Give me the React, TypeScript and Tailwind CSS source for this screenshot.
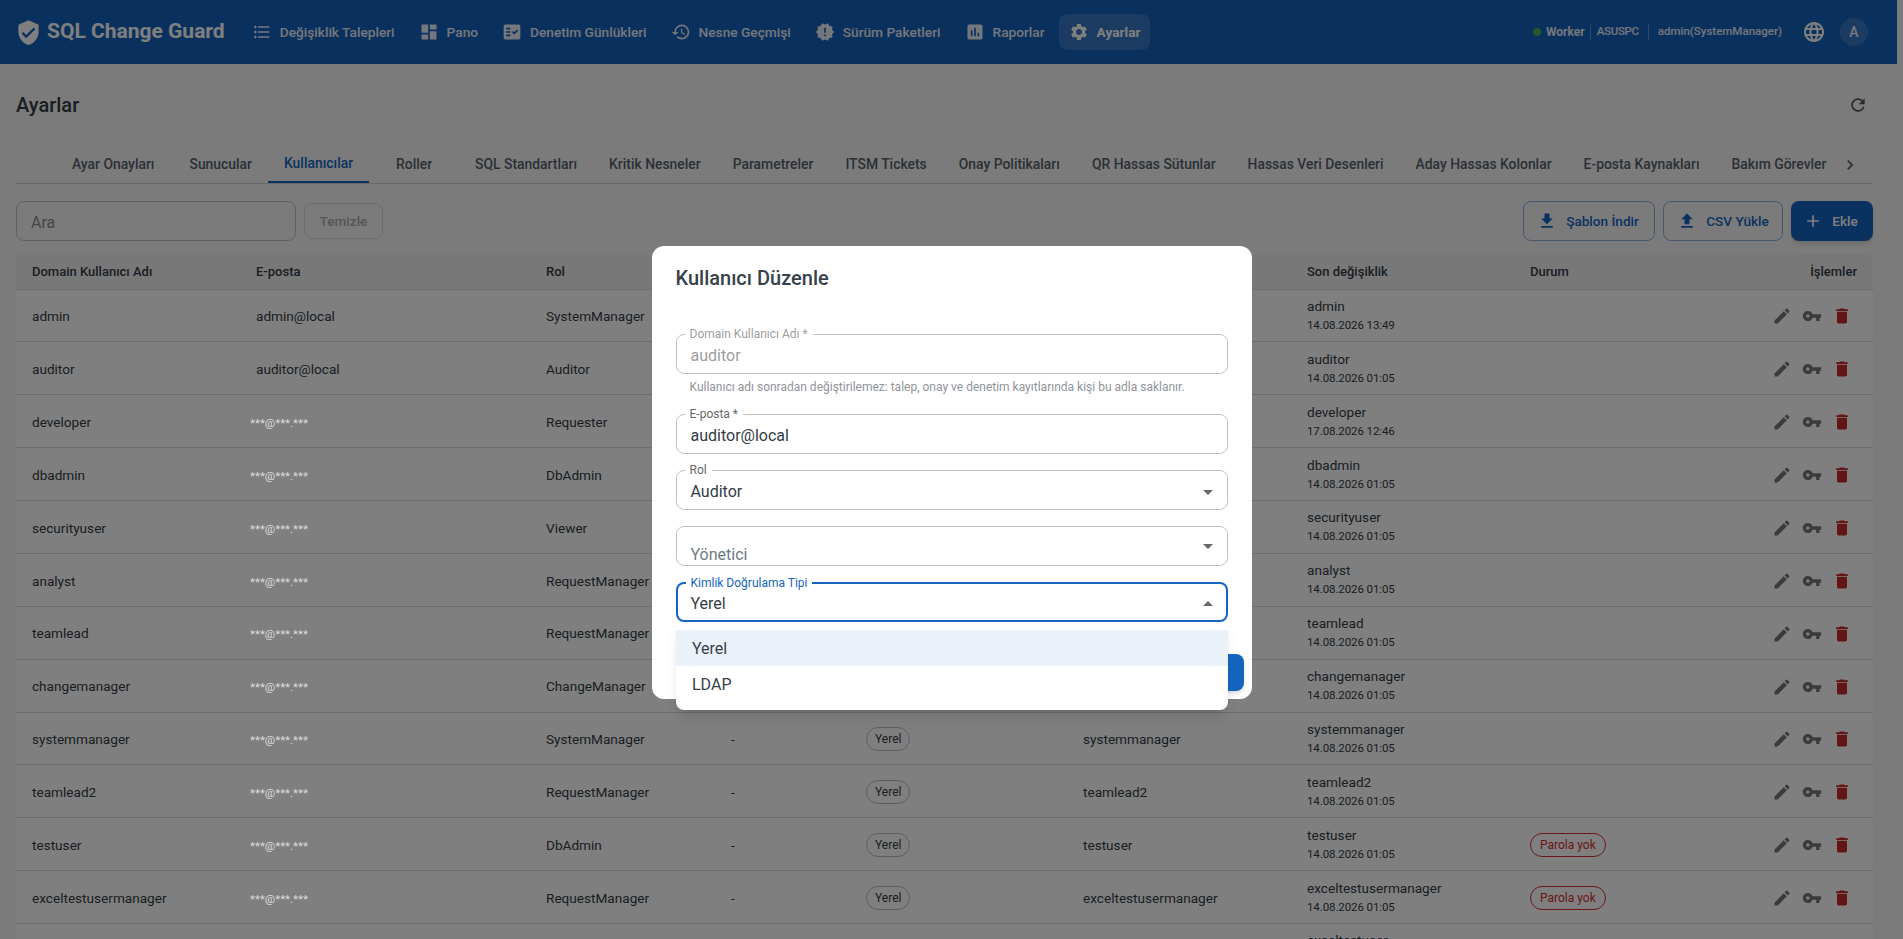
import {
  MdAdd,
  MdArrowDropDown,
  MdArrowDropUp,
  MdAssessment,
  MdChevronRight,
  MdDashboard,
  MdDelete,
  MdEdit,
  MdFactCheck,
  MdFileDownload,
  MdFileUpload,
  MdFormatListBulleted,
  MdHistory,
  MdLanguage,
  MdNewReleases,
  MdRefresh,
  MdSettings,
  MdVerifiedUser,
  MdVpnKey,
} from 'react-icons/md'

const navItems = [
  { label: 'Değişiklik Talepleri', icon: MdFormatListBulleted },
  { label: 'Pano', icon: MdDashboard },
  { label: 'Denetim Günlükleri', icon: MdFactCheck },
  { label: 'Nesne Geçmişi', icon: MdHistory },
  { label: 'Sürüm Paketleri', icon: MdNewReleases },
  { label: 'Raporlar', icon: MdAssessment },
  { label: 'Ayarlar', icon: MdSettings, active: true },
]

const tabs = [
  'Ayar Onayları',
  'Sunucular',
  'Kullanıcılar',
  'Roller',
  'SQL Standartları',
  'Kritik Nesneler',
  'Parametreler',
  'ITSM Tickets',
  'Onay Politikaları',
  'QR Hassas Sütunlar',
  'Hassas Veri Desenleri',
  'Aday Hassas Kolonlar',
  'E-posta Kaynakları',
  'Bakım Görevler',
]

const users = [
  { name: 'admin', email: 'admin@local', role: 'SystemManager', date: '14.08.2026 13:49' },
  { name: 'auditor', email: 'auditor@local', role: 'Auditor', date: '14.08.2026 01:05' },
  { name: 'developer', email: '***@***.***', role: 'Requester', date: '17.08.2026 12:46' },
  { name: 'dbadmin', email: '***@***.***', role: 'DbAdmin', date: '14.08.2026 01:05' },
  { name: 'securityuser', email: '***@***.***', role: 'Viewer', date: '14.08.2026 01:05' },
  { name: 'analyst', email: '***@***.***', role: 'RequestManager', date: '14.08.2026 01:05' },
  { name: 'teamlead', email: '***@***.***', role: 'RequestManager', date: '14.08.2026 01:05' },
  { name: 'changemanager', email: '***@***.***', role: 'ChangeManager', date: '14.08.2026 01:05' },
  { name: 'systemmanager', email: '***@***.***', role: 'SystemManager', date: '14.08.2026 01:05' },
  { name: 'teamlead2', email: '***@***.***', role: 'RequestManager', date: '14.08.2026 01:05' },
  { name: 'testuser', email: '***@***.***', role: 'DbAdmin', date: '14.08.2026 01:05', noPassword: true },
  { name: 'exceltestusermanager', email: '***@***.***', role: 'RequestManager', date: '14.08.2026 01:05', noPassword: true },
  { name: 'exceltestuser', email: '***@***.***', role: 'Requester', date: '14.08.2026 01:05', noPassword: true },
]

function Field({ label, children, focused, disabled }: { label?: string; children: React.ReactNode; focused?: boolean; disabled?: boolean }) {
  return (
    <div className={`relative h-10 rounded-lg border ${focused ? 'border-2 border-[#1565c0]' : 'border-[#c4c4c4]'}`}>
      {label && (
        <span className={`absolute left-[8px] -top-[9px] bg-white px-[5px] text-xs leading-4 ${focused ? 'text-[#1565c0]' : disabled ? 'text-[#9e9e9e]' : 'text-[#666]'}`}>
          {label}
        </span>
      )}
      {children}
    </div>
  )
}

export default function App() {
  return (
    <div className='relative h-[939px] w-[1903px] overflow-hidden bg-[#f6f7f8] font-["Roboto","Liberation_Sans",sans-serif] text-[#333c45]'>
      <header className="flex h-16 w-[1897px] items-center bg-[#1560bd] pl-[18px] pr-[29px] text-white">
        <MdVerifiedUser className="ml-[-3px] text-[27px]" />
        <span className="ml-[5px] text-[21px] font-bold">SQL Change Guard</span>
        <nav className="ml-[17px] flex items-center gap-1">
          {navItems.map(item => (
            <span
              key={item.label}
              className={`flex h-9 items-center gap-2 rounded-lg px-[10px] text-[13.7px] ${item.active ? 'bg-white/15 font-bold' : 'font-medium text-white/90'}`}
            >
              <item.icon className="text-xl" />
              {item.label}
            </span>
          ))}
        </nav>
        <div className="ml-auto flex items-center text-[11.5px] font-medium text-white/90">
          <span className="mr-[5px] h-2 w-2 rounded-full bg-[#4caf50]" />
          <span className="text-xs font-bold">Worker</span>
          <span className="ml-[5px] mr-[6px] h-4 w-px bg-white/30" />
          <span className="tracking-tight">ASUSPC</span>
          <span className="ml-[9px] mr-[9px] h-4 w-px bg-white/30" />
          <span>admin(SystemManager)</span>
          <MdLanguage className="ml-5 text-2xl text-white" />
          <span className="ml-[14px] flex h-7 w-7 items-center justify-center rounded-full bg-white/15 text-sm">A</span>
        </div>
      </header>

      <main className="w-[1889px] px-4">
        <div className="flex h-[82px] items-center justify-between">
          <h1 className="text-xl font-medium">Ayarlar</h1>
          <MdRefresh className="mr-[5px] text-xl text-[#555]" />
        </div>

        <div className="flex h-[38px] items-stretch border-b border-[#cfd3d6] pr-[3px] text-[13.9px] font-medium text-[#56616c]">
          <div className="w-10 shrink-0" />
          <div className="flex min-w-0 flex-1 overflow-hidden">
            {tabs.map((tab, i) => (
              <span
                key={tab}
                className={`flex min-w-[90px] shrink-0 items-center justify-center whitespace-nowrap pl-4 ${i === 0 ? 'pr-[19px]' : 'pr-4'} ${tab === 'Kullanıcılar' ? 'border-b-2 border-[#1565c0] text-[#1565c0]' : ''}`}
              >
                {tab}
              </span>
            ))}
          </div>
          <div className="flex w-10 shrink-0 items-center justify-center">
            <MdChevronRight className="text-xl" />
          </div>
        </div>

        <div className="mt-[17px] flex items-center gap-2">
          <div className="flex h-10 w-[280px] items-center rounded-lg border border-[#bfc3c7] px-[14px] pt-[3px] text-base text-[#8a8f94]">Ara</div>
          <span className="flex h-9 w-[79px] items-center justify-center rounded-lg border border-[#d6d9dc] text-[13.6px] font-medium text-[#a9adb1]">Temizle</span>
          <div className="ml-auto flex gap-2 text-[13.6px] font-medium text-[#1565c0]">
            <span className="flex h-10 w-[132px] items-center justify-center gap-[9px] rounded-lg border border-[#8fb0d8] pr-[2px]">
              <MdFileDownload className="text-xl" />
              Şablon İndir
            </span>
            <span className="flex h-10 w-[120px] items-center justify-center gap-[9px] rounded-lg border border-[#8fb0d8]">
              <MdFileUpload className="text-xl" />
              CSV Yükle
            </span>
            <span className="flex h-10 w-[82px] items-center justify-center gap-[9px] rounded-lg bg-[#1565c0] pr-[3px] text-white shadow-md">
              <MdAdd className="text-xl" />
              Ekle
            </span>
          </div>
        </div>

        <table className="mt-[13px] w-[1857px] table-fixed border-collapse bg-white text-[13.6px]">
          <colgroup>
            <col className="w-[224px]" />
            <col className="w-[290px]" />
            <col className="w-[185px]" />
            <col className="w-[135px]" />
            <col className="w-[217px]" />
            <col className="w-[224px]" />
            <col className="w-[223px]" />
            <col className="w-[230px]" />
            <col className="w-[129px]" />
          </colgroup>
          <thead>
            <tr className="h-[35px] border-b border-[#dcdfe2] bg-[#f0f1f2] text-left text-[13px]">
              <th className="px-4 font-medium">Domain Kullanıcı Adı</th>
              <th className="px-4 font-medium">E-posta</th>
              <th className="px-4 font-medium">Rol</th>
              <th className="px-4 font-medium">Yönetici</th>
              <th className="px-4 font-medium">Kimlik Doğrulama</th>
              <th className="px-4 font-medium">Görünen Ad</th>
              <th className="px-4 font-medium">Son değişiklik</th>
              <th className="px-4 font-medium">Durum</th>
              <th className="px-4 text-right font-medium">İşlemler</th>
            </tr>
          </thead>
          <tbody>
            {users.map(u => (
              <tr key={u.name} className="h-[52.875px] border-b border-[#d8dbde]">
                <td className="px-4 pt-[2px]">{u.name}</td>
                <td className="px-4 pt-[2px]">
                  {u.email.startsWith('*') ? (
                    <span className="relative z-10 ml-[-6px] text-[11.5px] text-[#dcdcdc]">{u.email}</span>
                  ) : (
                    u.email
                  )}
                </td>
                <td className="px-4 pt-[2px]">{u.role}</td>
                <td className="px-4 pt-[2px]">-</td>
                <td className="px-4 pt-[2px]">
                  <span className="inline-flex h-6 items-center rounded-full border border-[#bdbdbd] px-2 text-xs">Yerel</span>
                </td>
                <td className="px-4 pt-[2px]">{u.name}</td>
                <td className="px-4">
                  <div className="leading-5">{u.name}</div>
                  <div className="text-[11.5px] leading-[19px] tracking-[-0.1px]">{u.date}</div>
                </td>
                <td className="px-4 pt-[2px]">
                  {u.noPassword && (
                    <span className="inline-flex h-6 items-center rounded-full border border-[#d32f2f] px-[9px] text-xs text-[#d32f2f]">Parola yok</span>
                  )}
                </td>
                <td className="px-4 pt-[2px]">
                  <div className="flex justify-end text-xl text-[#777]">
                    <span className="flex w-[30px] justify-center"><MdEdit /></span>
                    <span className="flex w-[30px] justify-center"><MdVpnKey /></span>
                    <span className="flex w-[30px] justify-center text-[#c62828]"><MdDelete /></span>
                  </div>
                </td>
              </tr>
            ))}
          </tbody>
        </table>
      </main>

      {/* backdrop */}
      <div className="absolute inset-0 z-[5] bg-black/50" />

      {/* dialog */}
      <div className="absolute inset-0 z-20 flex items-start justify-center">
        <div className="mt-[246px] w-[600px] rounded-xl bg-white">
          <h2 className="px-6 py-4 text-xl font-medium leading-8 text-[#37414a]">Kullanıcı Düzenle</h2>
          <div className="flex flex-col gap-4 px-6 pb-6 pt-6">
            <div>
              <Field label="Domain Kullanıcı Adı *" disabled>
                <div className="flex h-full items-center px-[14px] pt-1 text-base text-[#9e9e9e]">auditor</div>
              </Field>
              <p className="mx-[14px] mt-[3px] text-xs leading-[21px] text-[#8f9499]">
                Kullanıcı adı sonradan değiştirilemez: talep, onay ve denetim kayıtlarında kişi bu adla saklanır.
              </p>
            </div>
            <Field label="E-posta *">
              <div className="flex h-full items-center px-[14px] pt-1 text-base">auditor@local</div>
            </Field>
            <Field label="Rol">
              <div className="flex h-full items-center justify-between pl-[14px] pr-[7px] pt-1 text-base">
                Auditor
                <MdArrowDropDown className="text-2xl text-[#666]" />
              </div>
            </Field>
            <Field>
              <div className="flex h-full items-center justify-between overflow-hidden pl-[14px] pr-[7px] text-base text-[#6b7a85]">
                <span className="pt-[17px]">Yönetici</span>
                <MdArrowDropDown className="text-2xl text-[#666]" />
              </div>
            </Field>
            <Field label="Kimlik Doğrulama Tipi" focused>
              <div className="flex h-full items-center justify-between pl-[13px] pr-[6px] pt-[3px] text-base">
                Yerel
                <MdArrowDropUp className="text-2xl text-[#666]" />
              </div>
            </Field>
          </div>
          <div className="flex justify-end gap-2 p-2">
            <span className="flex h-[37px] items-center rounded-lg px-4 text-sm font-medium text-[#1565c0]">İptal</span>
            <span className="flex h-[37px] items-center rounded-lg bg-[#1565c0] px-4 text-sm font-medium text-white shadow-md">Kaydet</span>
          </div>
        </div>
      </div>

      {/* open select menu */}
      <div className="absolute left-[676px] top-[622px] z-30 w-[552px] rounded-lg bg-white py-2 text-base text-[#37414a] shadow-lg">
        <div className="flex h-9 items-center bg-[#ebf1f9] px-4 pt-[2px]">Yerel</div>
        <div className="flex h-9 items-center px-4 pt-[2px]">LDAP</div>
      </div>
    </div>
  )
}
